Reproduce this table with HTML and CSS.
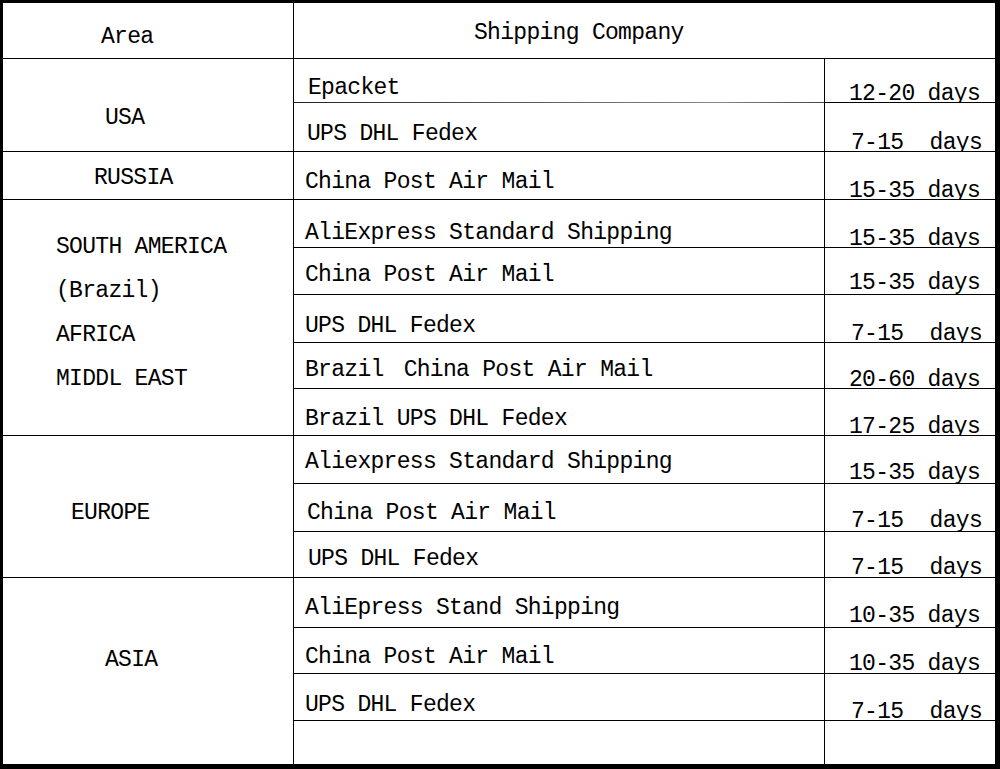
FILE: index.html
```html
<!DOCTYPE html>
<html lang="en">
<head>
<meta charset="utf-8">
<title>Shipping Times</title>
<link rel="stylesheet" href="styles.css">
</head>
<body>
<div class="sheet">
  <div class="cell head-area">Area</div>
  <div class="cell head-ship">Shipping Company</div>

  <div class="cell area area-usa">USA</div>
  <div class="cell co t19 x3 epacket">Epacket</div>
  <div class="cell days b0">12-20 days</div>
  <div class="cell co t21 x2">UPS DHL Fedex</div>
  <div class="cell days d7 b0">7-15  days</div>

  <div class="cell area area-russia">RUSSIA</div>
  <div class="cell co t20">China Post Air Mail</div>
  <div class="cell days b0">15-35 days</div>

  <div class="cell area area-sa">SOUTH AMERICA<br>(Brazil)<br>AFRICA<br>MIDDL EAST</div>
  <div class="cell co t23">AliExpress Standard Shipping</div>
  <div class="cell days b0">15-35 days</div>
  <div class="cell co t17">China Post Air Mail</div>
  <div class="cell days b3">15-35 days</div>
  <div class="cell co t21">UPS DHL Fedex</div>
  <div class="cell days d7 b0">7-15  days</div>
  <div class="cell co t17">Brazil<span class="gap">China Post Air Mail</span></div>
  <div class="cell days b0">20-60 days</div>
  <div class="cell co t20">Brazil UPS DHL Fedex</div>
  <div class="cell days b0">17-25 days</div>

  <div class="cell area area-eu">EUROPE</div>
  <div class="cell co t16">Aliexpress Standard Shipping</div>
  <div class="cell days">15-35 days</div>
  <div class="cell co t19 x2">China Post Air Mail</div>
  <div class="cell days d7">7-15  days</div>
  <div class="cell co t17 x3">UPS DHL Fedex</div>
  <div class="cell days d7 b1">7-15  days</div>

  <div class="cell area area-asia">ASIA</div>
  <div class="cell co t20">AliEpress Stand Shipping</div>
  <div class="cell days b3">10-35 days</div>
  <div class="cell co t19">China Post Air Mail</div>
  <div class="cell days b1">10-35 days</div>
  <div class="cell co t21">UPS DHL Fedex</div>
  <div class="cell days d7 b0">7-15  days</div>
  <div class="cell co"></div>
  <div class="cell days"></div>
</div>
</body>
</html>
```

FILE: styles.css
```css
* { box-sizing: border-box; }

html, body {
  margin: 0;
  padding: 0;
  background: #fff;
}

.sheet {
  width: 1000px;
  height: 769px;
  display: grid;
  grid-template-columns: 290px 530px 170px;
  grid-template-rows: 55px 43px 48px 47px 47px 46px 47px 45px 46px 47px 47px 45px 49px 45px 46px 43px;
  gap: 1px;
  background: #000;
  border-style: solid;
  border-color: #000;
  border-width: 3px 5px 5px 3px;
  font-family: "Liberation Mono", "DejaVu Sans Mono", monospace;
  font-size: 23px;
  letter-spacing: -0.7px;
  color: #000;
}

.cell {
  background: #fff;
  line-height: 20px;
  white-space: pre;
}

.head-area { padding: 24px 0 0 98px; }
.head-ship { grid-column: span 2; padding: 20px 0 0 180px; }

.area { white-space: normal; }
.area-usa { grid-row: span 2; padding: 49px 0 0 102px; }
.area-russia { padding: 16px 0 0 91px; }
.area-sa { grid-row: span 5; padding: 25px 0 0 53px; line-height: 44px; white-space: nowrap; }
.area-eu { grid-row: span 3; padding: 67px 0 0 68px; }
.area-asia { grid-row: span 4; padding: 72px 0 0 102px; }

.co { padding-left: 11px; }
.co.x2 { padding-left: 13px; }
.co.x3 { padding-left: 14px; }
.t16 { padding-top: 16px; }
.t17 { padding-top: 17px; }
.t19 { padding-top: 19px; }
.t20 { padding-top: 20px; }
.t21 { padding-top: 21px; }
.t23 { padding-top: 23px; }

.epacket { position: relative; }
.epacket::after {
  content: "";
  position: absolute;
  left: 0;
  right: 0;
  bottom: -1px;
  height: 1px;
  background: linear-gradient(to right, #222, #555 40%, #888 80%, #444);
}

.gap { margin-left: 20px; }

.days {
  display: flex;
  align-items: flex-end;
  line-height: 16px;
  padding: 0 0 2px 24px;
}
.days.d7 { padding-left: 26px; }
.days.b0 { padding-bottom: 0; }
.days.b1 { padding-bottom: 1px; }
.days.b3 { padding-bottom: 3px; }
```
